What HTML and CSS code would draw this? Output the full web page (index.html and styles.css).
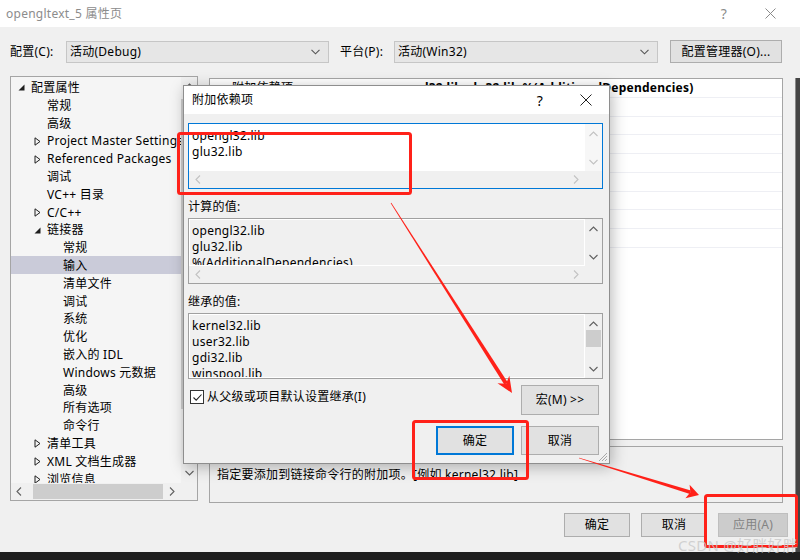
FILE: index.html
```html
<!DOCTYPE html>
<html lang="zh-CN">
<head>
    <meta charset="UTF-8">
    <title>opengltext_5 属性页</title>
    <link rel="stylesheet" href="styles.css">
</head>
<body>
    <div class="window">
        <div class="titlebar">
            <span class="title">opengltext_5 属性页</span>
            <span class="title-btn">?</span>
            <span class="title-btn">
                <svg width="11" height="11" viewBox="0 0 11 11"><path d="M0.5 0.5L10.5 10.5M10.5 0.5L0.5 10.5" stroke="#8a8a8a" stroke-width="1"/></svg>
            </span>
        </div>

        <div class="toolbar">
            <span class="tool-label">配置(C):</span>
            <div class="combo combo-config">
                <span>活动(Debug)</span>
                <svg class="chevron" width="9" height="6" viewBox="0 0 9 6"><path d="M0.5 0.8L4.5 4.8L8.5 0.8" fill="none" stroke="#555" stroke-width="1.1"/></svg>
            </div>
            <span class="tool-label platform-label">平台(P):</span>
            <div class="combo combo-platform">
                <span>活动(Win32)</span>
                <svg class="chevron" width="9" height="6" viewBox="0 0 9 6"><path d="M0.5 0.8L4.5 4.8L8.5 0.8" fill="none" stroke="#555" stroke-width="1.1"/></svg>
            </div>
            <button class="btn btn-manager">配置管理器(O)...</button>
        </div>

        <div class="content">
            <div class="tree">
                <ul class="tree-list">
                    <li class="lvl0"><span class="exp"><svg width="7" height="7" viewBox="0 0 7 7"><path d="M6.5 0.5V6.5H0.5Z" fill="#1e1e1e"/></svg></span>配置属性</li>
                    <li class="lvl1"><span class="exp"></span>常规</li>
                    <li class="lvl1"><span class="exp"></span>高级</li>
                    <li class="lvl1"><span class="exp"><svg width="7" height="9" viewBox="0 0 7 9"><path d="M1 0.8L6 4.5L1 8.2Z" fill="none" stroke="#1e1e1e" stroke-width="1"/></svg></span>Project Master Settings</li>
                    <li class="lvl1"><span class="exp"><svg width="7" height="9" viewBox="0 0 7 9"><path d="M1 0.8L6 4.5L1 8.2Z" fill="none" stroke="#1e1e1e" stroke-width="1"/></svg></span>Referenced Packages</li>
                    <li class="lvl1"><span class="exp"></span>调试</li>
                    <li class="lvl1"><span class="exp"></span>VC++ 目录</li>
                    <li class="lvl1"><span class="exp"><svg width="7" height="9" viewBox="0 0 7 9"><path d="M1 0.8L6 4.5L1 8.2Z" fill="none" stroke="#1e1e1e" stroke-width="1"/></svg></span>C/C++</li>
                    <li class="lvl1"><span class="exp"><svg width="7" height="7" viewBox="0 0 7 7"><path d="M6.5 0.5V6.5H0.5Z" fill="#1e1e1e"/></svg></span>链接器</li>
                    <li class="lvl2"><span class="exp"></span>常规</li>
                    <li class="lvl2 selected"><span class="exp"></span>输入</li>
                    <li class="lvl2"><span class="exp"></span>清单文件</li>
                    <li class="lvl2"><span class="exp"></span>调试</li>
                    <li class="lvl2"><span class="exp"></span>系统</li>
                    <li class="lvl2"><span class="exp"></span>优化</li>
                    <li class="lvl2"><span class="exp"></span>嵌入的 IDL</li>
                    <li class="lvl2"><span class="exp"></span>Windows 元数据</li>
                    <li class="lvl2"><span class="exp"></span>高级</li>
                    <li class="lvl2"><span class="exp"></span>所有选项</li>
                    <li class="lvl2"><span class="exp"></span>命令行</li>
                    <li class="lvl1"><span class="exp"><svg width="7" height="9" viewBox="0 0 7 9"><path d="M1 0.8L6 4.5L1 8.2Z" fill="none" stroke="#1e1e1e" stroke-width="1"/></svg></span>清单工具</li>
                    <li class="lvl1"><span class="exp"><svg width="7" height="9" viewBox="0 0 7 9"><path d="M1 0.8L6 4.5L1 8.2Z" fill="none" stroke="#1e1e1e" stroke-width="1"/></svg></span>XML 文档生成器</li>
                    <li class="lvl1"><span class="exp"><svg width="7" height="9" viewBox="0 0 7 9"><path d="M1 0.8L6 4.5L1 8.2Z" fill="none" stroke="#1e1e1e" stroke-width="1"/></svg></span>浏览信息</li>
                </ul>
                <div class="vscroll">
                    <svg class="arrow-up" width="9" height="6" viewBox="0 0 9 6"><path d="M0.5 5L4.5 1L8.5 5" fill="none" stroke="#606060" stroke-width="1.1"/></svg>
                    <div class="vthumb"></div>
                    <svg class="arrow-down" width="9" height="6" viewBox="0 0 9 6"><path d="M0.5 1L4.5 5L8.5 1" fill="none" stroke="#606060" stroke-width="1.1"/></svg>
                </div>
                <div class="hscroll">
                    <svg width="6" height="9" viewBox="0 0 6 9"><path d="M5 0.5L1 4.5L5 8.5" fill="none" stroke="#606060" stroke-width="1.1"/></svg>
                    <div class="hthumb"></div>
                    <svg width="6" height="9" viewBox="0 0 6 9"><path d="M1 0.5L5 4.5L1 8.5" fill="none" stroke="#606060" stroke-width="1.1"/></svg>
                </div>
                <div class="corner"></div>
            </div>

            <div class="pane">
                <div class="grid">
                    <div class="grid-row"><span class="name">附加依赖项</span><span class="value">opengl32.lib;glu32.lib;%(AdditionalDependencies)</span></div>
                    <div class="grid-row"><span class="name">忽略所有默认库</span><span class="value"></span></div>
                    <div class="grid-row"><span class="name">忽略特定默认库</span><span class="value"></span></div>
                    <div class="grid-row"><span class="name">模块定义文件</span><span class="value"></span></div>
                    <div class="grid-row"><span class="name">将模块添加到程序集</span><span class="value"></span></div>
                    <div class="grid-row"><span class="name">嵌入托管资源文件</span><span class="value"></span></div>
                    <div class="grid-row"><span class="name">强制符号引用</span><span class="value"></span></div>
                    <div class="grid-row"><span class="name">延迟加载的 DLL</span><span class="value"></span></div>
                    <div class="grid-row"><span class="name">程序集链接资源</span><span class="value"></span></div>
                </div>
                <div class="desc">
                    <div class="desc-title">附加依赖项</div>
                    <div class="desc-text">指定要添加到链接命令行的附加项。[例如 kernel32.lib]</div>
                </div>
            </div>
        </div>

        <div class="footer">
            <button class="btn btn-main">确定</button>
            <button class="btn btn-main">取消</button>
            <button class="btn btn-main" disabled>应用(A)</button>
        </div>
    </div>

    <div class="backdrop-edge"></div>
    <div class="taskbar"></div>

    <!-- 附加依赖项 对话框 -->
    <div class="dialog">
        <div class="dialog-title">
            <span class="title">附加依赖项</span>
            <span class="dlg-btn">?</span>
            <span class="dlg-btn">
                <svg width="12" height="12" viewBox="0 0 12 12"><path d="M0.5 0.5L11.5 11.5M11.5 0.5L0.5 11.5" stroke="#222" stroke-width="1"/></svg>
            </span>
        </div>
        <div class="dialog-body">
            <div class="listbox editable">
                <div class="lines">
                    <div>opengl32.lib</div>
                    <div>glu32.lib</div>
                </div>
                <div class="lb-vscroll">
                    <svg width="9" height="6" viewBox="0 0 9 6"><path d="M0.5 5L4.5 1L8.5 5" fill="none" stroke="#c2c2c2" stroke-width="1.1"/></svg>
                    <svg width="9" height="6" viewBox="0 0 9 6"><path d="M0.5 1L4.5 5L8.5 1" fill="none" stroke="#c2c2c2" stroke-width="1.1"/></svg>
                </div>
                <div class="lb-hscroll">
                    <svg width="6" height="9" viewBox="0 0 6 9"><path d="M5 0.5L1 4.5L5 8.5" fill="none" stroke="#c2c2c2" stroke-width="1.1"/></svg>
                    <svg width="6" height="9" viewBox="0 0 6 9"><path d="M1 0.5L5 4.5L1 8.5" fill="none" stroke="#c2c2c2" stroke-width="1.1"/></svg>
                </div>
            </div>

            <div class="field-label">计算的值:</div>
            <div class="listbox readonly">
                <div class="lines">
                    <div>opengl32.lib</div>
                    <div>glu32.lib</div>
                    <div>%(AdditionalDependencies)</div>
                </div>
                <div class="lb-vscroll">
                    <svg width="9" height="6" viewBox="0 0 9 6"><path d="M0.5 5L4.5 1L8.5 5" fill="none" stroke="#606060" stroke-width="1.1"/></svg>
                    <svg width="9" height="6" viewBox="0 0 9 6"><path d="M0.5 1L4.5 5L8.5 1" fill="none" stroke="#606060" stroke-width="1.1"/></svg>
                </div>
                <div class="lb-hscroll">
                    <svg width="6" height="9" viewBox="0 0 6 9"><path d="M5 0.5L1 4.5L5 8.5" fill="none" stroke="#c2c2c2" stroke-width="1.1"/></svg>
                    <svg width="6" height="9" viewBox="0 0 6 9"><path d="M1 0.5L5 4.5L1 8.5" fill="none" stroke="#c2c2c2" stroke-width="1.1"/></svg>
                </div>
            </div>

            <div class="field-label">继承的值:</div>
            <div class="listbox readonly no-h">
                <div class="lines">
                    <div>kernel32.lib</div>
                    <div>user32.lib</div>
                    <div>gdi32.lib</div>
                    <div>winspool.lib</div>
                </div>
                <div class="lb-vscroll">
                    <svg width="9" height="6" viewBox="0 0 9 6"><path d="M0.5 5L4.5 1L8.5 5" fill="none" stroke="#606060" stroke-width="1.1"/></svg>
                    <div class="lb-thumb"></div>
                    <svg width="9" height="6" viewBox="0 0 9 6"><path d="M0.5 1L4.5 5L8.5 1" fill="none" stroke="#606060" stroke-width="1.1"/></svg>
                </div>
            </div>

            <div class="inherit-row">
                <label class="check">
                    <span class="check-box">
                        <svg width="11" height="11" viewBox="0 0 11 11"><path d="M1.5 5.5L4.2 8.2L9.5 2.5" fill="none" stroke="#222" stroke-width="1.1"/></svg>
                    </span>
                    从父级或项目默认设置继承(I)
                </label>
                <button class="btn btn-dlg">宏(M) &gt;&gt;</button>
            </div>

            <div class="dialog-actions">
                <button class="btn btn-dlg default">确定</button>
                <button class="btn btn-dlg">取消</button>
            </div>
        </div>
        <svg class="grip" width="10" height="10" viewBox="0 0 10 10">
            <path d="M9 1L1 9M9 4L4 9M9 7L7 9" stroke="#a8a8a8" stroke-width="1"/>
        </svg>
    </div>

    <!-- 标注 -->
    <svg class="marks" width="800" height="560" viewBox="0 0 800 560">
        <rect x="178.5" y="133.5" width="232" height="60" rx="2" fill="none" stroke="#ff2119" stroke-width="3"/>
        <rect x="413.5" y="421.5" width="114" height="57" rx="2" fill="none" stroke="#ff2119" stroke-width="3"/>
        <rect x="705.5" y="495.5" width="91" height="51" rx="2" fill="none" stroke="#ff2119" stroke-width="3"/>

        <polygon points="390.7,203.2 391.3,202.8 507.8,382.6 504.4,384.8" fill="#ff2119"/>
        <polygon points="512,393 497.5,383.3 506.1,383.7 509.3,375.7" fill="#ff2119"/>

        <polygon points="578.9,458.3 579.1,457.7 690.9,490.6 689.9,494" fill="#ff2119"/>
        <polygon points="699,495 685.4,498.2 690.4,492.3 689.6,484.8" fill="#ff2119"/>
    </svg>
    <div class="watermark">CSDN @好胖好胖</div>
</body>
</html>
```

FILE: styles.css
```css
* {
    margin: 0;
    padding: 0;
    box-sizing: border-box;
}

body {
    width: 800px;
    height: 560px;
    position: relative;
    overflow: hidden;
    background: #1f1f1f;
    font-family: "Noto Sans", "Noto Sans CJK SC", sans-serif;
    font-size: 12px;
    letter-spacing: 0.25px;
    color: #000;
}

button {
    font-family: inherit;
    font-size: 12px;
    letter-spacing: inherit;
    color: #000;
}

.window {
    width: 800px;
    height: 552px;
    background: #f0f0f0;
    display: flex;
    flex-direction: column;
}

/* 标题栏 */
.titlebar {
    height: 27px;
    background: #fff;
    display: flex;
    align-items: center;
    padding: 0 7px 0 6px;
    color: #8c8c8c;
}

.titlebar .title {
    flex: 1;
    line-height: 16px;
}

.title-btn {
    width: 46px;
    height: 27px;
    display: flex;
    align-items: center;
    justify-content: center;
    font-size: 14px;
}

/* 配置 / 平台 */
.toolbar {
    display: flex;
    align-items: center;
    height: 23px;
    margin-top: 13px;
    padding-left: 10px;
}

.tool-label {
    width: 56px;
    line-height: 16px;
}

.platform-label {
    width: 54px;
    margin-left: 11px;
}

.combo {
    height: 22px;
    background: #e6e6e6;
    border: 1px solid #c6c6c6;
    display: flex;
    align-items: center;
    justify-content: space-between;
    padding: 0 8px 0 3px;
    line-height: 16px;
}

.combo-config {
    width: 263px;
}

.combo-platform {
    width: 264px;
}

.btn {
    background: #e1e1e1;
    border: 1px solid #adadad;
    line-height: 16px;
}

.btn-manager {
    width: 112px;
    height: 23px;
    margin-left: 12px;
}

/* 主体 */
.content {
    display: flex;
    gap: 11px;
    padding-left: 10px;
    margin-top: 13px;
    height: 427px;
}

.tree {
    width: 188px;
    height: 425px;
    border: 1px solid #a5a5a5;
    background: #f5f5f5;
    display: grid;
    grid-template-columns: 170px 16px;
    grid-template-rows: 406px 17px;
}

.tree-list {
    list-style: none;
    overflow: hidden;
    padding-top: 1px;
}

.tree-list li {
    height: 17.8px;
    line-height: 17.8px;
    padding-top: 2px;
    white-space: nowrap;
    display: flex;
    align-items: center;
}

.tree-list .lvl0 { padding-left: 4px; }
.tree-list .lvl1 { padding-left: 20px; }
.tree-list .lvl2 { padding-left: 36px; }

.tree-list .selected {
    background: #cacbd9;
}

.exp {
    width: 16px;
    flex: none;
    display: flex;
    align-items: center;
    padding-left: 3px;
}

.vscroll {
    background: #f0f0f0;
    display: flex;
    flex-direction: column;
    align-items: center;
    padding: 6px 0 7px;
}

.vthumb {
    width: 16px;
    height: 310px;
    background: #cdcdcd;
    margin-top: 10px;
}

.arrow-down {
    margin-top: auto;
}

.hscroll {
    background: #f0f0f0;
    display: flex;
    align-items: center;
    padding: 0 6px 0 5px;
}

.hthumb {
    width: 130px;
    height: 15px;
    background: #cdcdcd;
    margin: 0 auto 0 11px;
}

.corner {
    background: #f0f0f0;
}

.pane {
    display: flex;
    flex-direction: column;
    gap: 6px;
    padding-top: 2px;
}

.grid {
    width: 574px;
    height: 362px;
    background: #fff;
    border: 1px solid #a5a5a5;
}

.grid-row {
    display: flex;
    height: 18.75px;
    line-height: 18px;
    border-bottom: 1px solid #eeeff4;
}

.grid-row .name {
    width: 172px;
    padding-left: 22px;
    white-space: nowrap;
}

.grid-row .value {
    padding-left: 4px;
    font-weight: bold;
    white-space: nowrap;
}

.desc {
    width: 574px;
    height: 57px;
    border: 1px solid #a5a5a5;
    padding: 2px 7px;
    line-height: 17px;
}

.desc-title {
    font-weight: bold;
}

.footer {
    display: flex;
    justify-content: flex-end;
    gap: 11px;
    padding-right: 12px;
    margin-top: 10px;
}

.btn-main {
    width: 66px;
    height: 24px;
}

.btn-main:disabled {
    width: 70px;
    background: #cccccc;
    border-color: #bfbfbf;
    color: #838383;
}

/* 背后的窗口边缘与任务栏 */
.backdrop-edge {
    position: absolute;
    left: 795px;
    top: 78px;
    width: 5px;
    height: 474px;
    background: #454545;
    border-left: 1px solid #8a8a8a;
}

.taskbar {
    height: 8px;
    background: #1f1f1f;
}

/* 对话框 */
.dialog {
    position: absolute;
    left: 183px;
    top: 85px;
    width: 427px;
    height: 379px;
    background: #f0f0f0;
    border: 1px solid #8e8e8e;
    box-shadow: 2px 3px 14px rgba(0, 0, 0, 0.28);
}

.dialog-title {
    height: 28px;
    background: #fff;
    display: flex;
    align-items: center;
    padding-left: 8px;
}

.dialog-title .title {
    flex: 1;
    line-height: 16px;
}

.dlg-btn {
    width: 46px;
    height: 28px;
    display: flex;
    align-items: center;
    justify-content: center;
    font-size: 14px;
}

.dialog-body {
    padding: 9px 6px 0 4px;
}

.listbox {
    height: 66px;
    border: 1px solid #a0a0a0;
    display: grid;
    grid-template-columns: 1fr 17px;
    grid-template-rows: 1fr 17px;
}

.listbox.no-h {
    grid-template-rows: 1fr;
}

.listbox.editable {
    border-color: #0078d7;
}

.listbox .lines {
    padding: 4px 3px 0;
    line-height: 16px;
    overflow: hidden;
    white-space: nowrap;
}

.editable .lines {
    background: #fff;
}

.readonly .lines {
    background: #f0f0f0;
    border: 1px solid #fff;
    padding: 3px 2px 0;
}

.lb-vscroll {
    background: #f0f0f0;
    display: flex;
    flex-direction: column;
    align-items: center;
    justify-content: space-between;
    padding: 7px 0 6px;
}

.editable .lb-vscroll {
    background: #f7f7f7;
}

.lb-thumb {
    width: 15px;
    height: 17px;
    background: #cdcdcd;
    margin-bottom: auto;
    margin-top: 3px;
}

.lb-hscroll {
    grid-column: 1 / 3;
    background: #f0f0f0;
    display: flex;
    align-items: center;
    justify-content: space-between;
    padding: 0 23px 0 6px;
}

.field-label {
    margin-top: 10px;
    line-height: 16px;
}

.field-label + .listbox {
    margin-top: 3px;
}

.inherit-row {
    display: flex;
    justify-content: space-between;
    align-items: flex-start;
    margin-top: 6px;
    padding-right: 4px;
}

.check {
    display: flex;
    align-items: center;
    gap: 3px;
    margin-top: 4px;
    padding-left: 2px;
    line-height: 16px;
}

.check-box {
    width: 14px;
    height: 14px;
    border: 1px solid #333;
    background: #fff;
    display: flex;
    align-items: center;
    justify-content: center;
}

.btn-dlg {
    width: 78px;
    height: 30px;
}

.btn-dlg.default {
    border: 2px solid #0078d7;
}

.dialog-actions {
    display: flex;
    justify-content: flex-end;
    gap: 7px;
    margin-top: 11px;
    padding-right: 4px;
}

.dialog-actions .btn-dlg {
    height: 29px;
}

.grip {
    position: absolute;
    right: 1px;
    bottom: 1px;
}

/* 标注层 */
.marks {
    position: absolute;
    left: 0;
    top: 0;
    pointer-events: none;
}

.watermark {
    position: absolute;
    left: 678px;
    top: 535px;
    font-size: 15px;
    line-height: 20px;
    color: rgba(200, 200, 200, 0.8);
    white-space: nowrap;
}
```
